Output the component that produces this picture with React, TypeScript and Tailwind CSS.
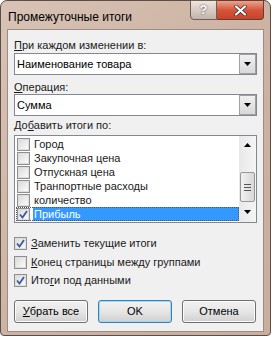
import React from 'react';

const font = { fontFamily: '"Liberation Sans", Arial, sans-serif' };

const CheckMark: React.FC = () => (
  <svg width="9" height="9" viewBox="0 0 9 9" className="block">
    <path d="M1 4.5 L3.5 7.5 L8 1" fill="none" stroke="#3b5aa0" strokeWidth="1.8" />
  </svg>
);

const Box: React.FC<{ checked?: boolean }> = ({ checked }) => (
  <div className="w-[13px] h-[13px] border border-[#8f8f8f] bg-[#f4f4f4] flex items-center justify-center shrink-0">
    <div className="w-[11px] h-[11px] border border-[#dedede] bg-gradient-to-br from-[#dcdcdc] to-[#fbfbfb] flex items-center justify-center">
      {checked && <CheckMark />}
    </div>
  </div>
);

const Arrow: React.FC<{ up?: boolean }> = ({ up }) => (
  <svg width="7" height="4" viewBox="0 0 7 4" className="block">
    {up ? <path d="M0 4 L3.5 0 L7 4 Z" fill="#000" /> : <path d="M0 0 L7 0 L3.5 4 Z" fill="#000" />}
  </svg>
);

const Combo: React.FC<{ value: string }> = ({ value }) => (
  <div className="h-[22px] border border-[#828790] bg-white flex items-center">
    <span className="pl-[2px] flex-1 text-black">{value}</span>
    <div className="w-[17px] h-[20px] border border-[#a0a0a0] bg-gradient-to-b from-[#f0f0f0] to-[#d8d8d8] flex items-center justify-center">
      <Arrow />
    </div>
  </div>
);

const items = ['Город', 'Закупочная цена', 'Отпускная цена', 'Транпортные расходы', 'количество', 'Прибыль'];

const Button: React.FC<{ children: React.ReactNode; primary?: boolean }> = ({ children, primary }) => (
  <div
    className={`w-[74px] h-[23px] rounded-[3px] border flex items-center justify-center text-black ${
      primary
        ? 'border-[#3c7fb1] shadow-[inset_0_0_0_1px_#9fd9f7]'
        : 'border-[#707070] shadow-[inset_0_0_0_1px_#fbfbfb]'
    } bg-gradient-to-b from-[#f2f2f2] via-[#e6e6e6] to-[#d0d0d0]`}
  >
    {children}
  </div>
);

export default function App() {
  return (
    <div className="w-[273px] h-[337px] bg-white" style={font}>
      <div className="w-[271px] h-[336px] rounded-t-[7px] rounded-b-[4px] border border-[#5b4e47] bg-gradient-to-br from-[#d8c3b6] via-[#cdb3a3] to-[#c9ad9d] flex flex-col">
        <div className="h-[28px] flex items-start relative">
          <span className="pl-[7px] pt-[7px] text-[12px] text-black">Промежуточные итоги</span>
          <div className="absolute right-[6px] top-[-1px] flex">
            <div className="w-[27px] h-[20px] rounded-bl-[4px] border border-[#6b5f58] bg-gradient-to-b from-[#efe6e0] via-[#d8ccc4] to-[#c3b4aa] flex items-center justify-center text-[13px] font-bold text-white [text-shadow:0_0_2px_#333]">
              ?
            </div>
            <div className="w-[47px] h-[20px] rounded-br-[4px] border border-l-0 border-[#6b3a2e] bg-gradient-to-b from-[#e8a48f] via-[#d4553a] to-[#c7432a] flex items-center justify-center">
              <svg width="13" height="11" viewBox="0 0 13 11">
                <path d="M2 1.5 L11 9.5 M11 1.5 L2 9.5" stroke="#3a2a2a" strokeWidth="3.6" strokeLinecap="round" />
                <path d="M2 1.5 L11 9.5 M11 1.5 L2 9.5" stroke="#fff" strokeWidth="2.2" strokeLinecap="round" />
              </svg>
            </div>
          </div>
        </div>
        <div className="mx-[6px] h-[303px] border border-[#9c8c82] bg-[#f0f0f0] px-[6px] pt-[8px] flex flex-col text-[11px] text-[#1a1a1a]">
          <div className="h-[14px] leading-[14px]">
            <span className="underline">П</span>ри каждом изменении в:
          </div>
          <div className="mt-[1px]">
            <Combo value="Наименование товара" />
          </div>
          <div className="mt-[5px] h-[14px] leading-[14px]">
            <span className="underline">О</span>перация:
          </div>
          <div>
            <Combo value="Сумма" />
          </div>
          <div className="mt-[2px] h-[14px] leading-[14px]">
            До<span className="underline">б</span>авить итоги по:
          </div>
          <div className="mt-[3px] h-[88px] border border-[#828790] bg-white flex">
            <div className="flex-1 pt-[1px] pl-[1px]">
              {items.map((it, i) => {
                const sel = i === items.length - 1;
                return (
                  <div
                    key={it}
                    className={`h-[14px] flex items-center gap-[3px] pl-[1px] ${sel ? 'outline outline-1 outline-dotted outline-[#555] -outline-offset-1' : ''}`}
                  >
                    <Box checked={sel} />
                    <span className={`flex-1 h-[14px] leading-[14px] pl-[1px] ${sel ? 'bg-[#3399ff] text-white' : ''}`}>{it}</span>
                  </div>
                );
              })}
            </div>
            <div className="w-[17px] bg-gradient-to-r from-[#e8e8e8] to-[#f5f5f5] flex flex-col items-center">
              <div className="h-[17px] flex items-center justify-center">
                <Arrow up />
              </div>
              <div className="mt-[19px] w-[15px] h-[30px] rounded-[2px] border border-[#979797] bg-gradient-to-r from-[#f0f0f0] to-[#d8d8d8] flex flex-col items-center justify-center gap-[2px]">
                <div className="w-[7px] h-[1px] bg-[#555]" />
                <div className="w-[7px] h-[1px] bg-[#555]" />
                <div className="w-[7px] h-[1px] bg-[#555]" />
              </div>
              <div className="flex-1 flex items-center justify-center">
                <Arrow />
              </div>
            </div>
          </div>
          <div className="mt-[11px] h-[18px] flex items-center gap-[4px]">
            <Box checked />
            <span>
              <span className="underline">З</span>аменить текущие итоги
            </span>
          </div>
          <div className="mt-[1px] h-[18px] flex items-center gap-[4px]">
            <Box />
            <span>
              <span className="underline">К</span>онец страницы между группами
            </span>
          </div>
          <div className="h-[18px] flex items-center gap-[4px]">
            <Box checked />
            <span>
              Ито<span className="underline">г</span>и под данными
            </span>
          </div>
          <div className="mt-[11px] flex justify-between pr-[1px]">
            <Button>
              <span className="underline">У</span>брать все
            </Button>
            <Button primary>OK</Button>
            <Button>Отмена</Button>
          </div>
        </div>
      </div>
    </div>
  );
}
